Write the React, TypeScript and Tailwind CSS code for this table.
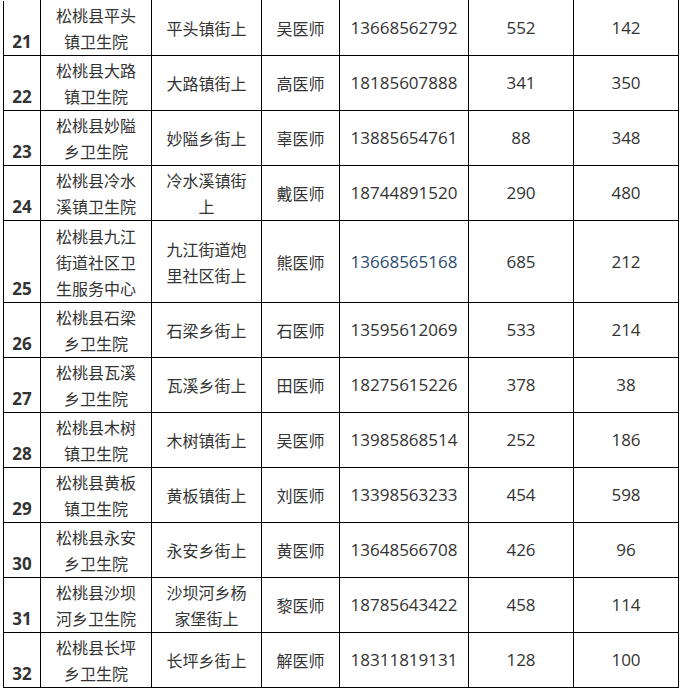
const rows: [string, string, string, string, string, string, string][] = [
  ["21", "松桃县平头镇卫生院", "平头镇街上", "吴医师", "13668562792", "552", "142"],
  ["22", "松桃县大路镇卫生院", "大路镇街上", "高医师", "18185607888", "341", "350"],
  ["23", "松桃县妙隘乡卫生院", "妙隘乡街上", "辜医师", "13885654761", "88", "348"],
  ["24", "松桃县冷水溪镇卫生院", "冷水溪镇街上", "戴医师", "18744891520", "290", "480"],
  ["25", "松桃县九江街道社区卫生服务中心", "九江街道炮里社区街上", "熊医师", "13668565168", "685", "212"],
  ["26", "松桃县石梁乡卫生院", "石梁乡街上", "石医师", "13595612069", "533", "214"],
  ["27", "松桃县瓦溪乡卫生院", "瓦溪乡街上", "田医师", "18275615226", "378", "38"],
  ["28", "松桃县木树镇卫生院", "木树镇街上", "吴医师", "13985868514", "252", "186"],
  ["29", "松桃县黄板镇卫生院", "黄板镇街上", "刘医师", "13398563233", "454", "598"],
  ["30", "松桃县永安乡卫生院", "永安乡街上", "黄医师", "13648566708", "426", "96"],
  ["31", "松桃县沙坝河乡卫生院", "沙坝河乡杨家堡街上", "黎医师", "18785643422", "458", "114"],
  ["32", "松桃县长坪乡卫生院", "长坪乡街上", "解医师", "18311819131", "128", "100"],
];

// break into lines of five characters, like the source sheet
function lines(s: string) {
  const out: string[] = [];
  for (let i = 0; i < s.length; i += 5) out.push(s.slice(i, i + 5));
  return out;
}

const cjk = "font-['Noto_Sans_CJK_SC','Noto_Sans',sans-serif] text-[16px] leading-[26px]";
const num = "font-['Open_Sans','Noto_Sans',sans-serif] text-[17px]";

export default function App() {
  return (
    <div className="w-[681px] h-[692px] overflow-hidden bg-white text-[#333]">
      <table className="ml-[3px] border-collapse table-fixed">
        <colgroup>
          <col className="w-[37px]" />
          <col className="w-[111px]" />
          <col className="w-[110px]" />
          <col className="w-[78px]" />
          <col className="w-[129px]" />
          <col className="w-[105px]" />
          <col className="w-[105px]" />
        </colgroup>
        <tbody>
          {rows.map((r, i) => {
            const tall = r[0] === "25";
            return (
              <tr key={r[0]} className={tall ? "h-[82px]" : "h-[55px]"}>
                <td
                  className={`border border-black align-bottom text-center font-bold pb-[3px] ${num} text-[16px] leading-[20px] ${
                    i === 0 ? "border-t-white" : ""
                  }`}
                >
                  {r[0]}
                </td>
                <td className={`border border-black text-center p-0 ${cjk} ${i === 0 ? "border-t-white" : ""}`}>
                  {lines(r[1]).map((l) => (
                    <div key={l}>{l}</div>
                  ))}
                </td>
                <td className={`border border-black text-center p-0 ${cjk} ${i === 0 ? "border-t-white" : ""}`}>
                  {lines(r[2]).map((l) => (
                    <div key={l}>{l}</div>
                  ))}
                </td>
                <td className={`border border-black text-center p-0 ${cjk} ${i === 0 ? "border-t-white" : ""}`}>
                  {r[3]}
                </td>
                <td
                  className={`border border-black text-center p-0 ${num} ${tall ? "text-[#2b4c70]" : ""} ${
                    i === 0 ? "border-t-white" : ""
                  }`}
                >
                  {r[4]}
                </td>
                <td className={`border border-black text-center p-0 ${num} ${i === 0 ? "border-t-white" : ""}`}>
                  {r[5]}
                </td>
                <td className={`border border-black text-center p-0 ${num} ${i === 0 ? "border-t-white" : ""}`}>
                  {r[6]}
                </td>
              </tr>
            );
          })}
        </tbody>
      </table>
    </div>
  );
}
